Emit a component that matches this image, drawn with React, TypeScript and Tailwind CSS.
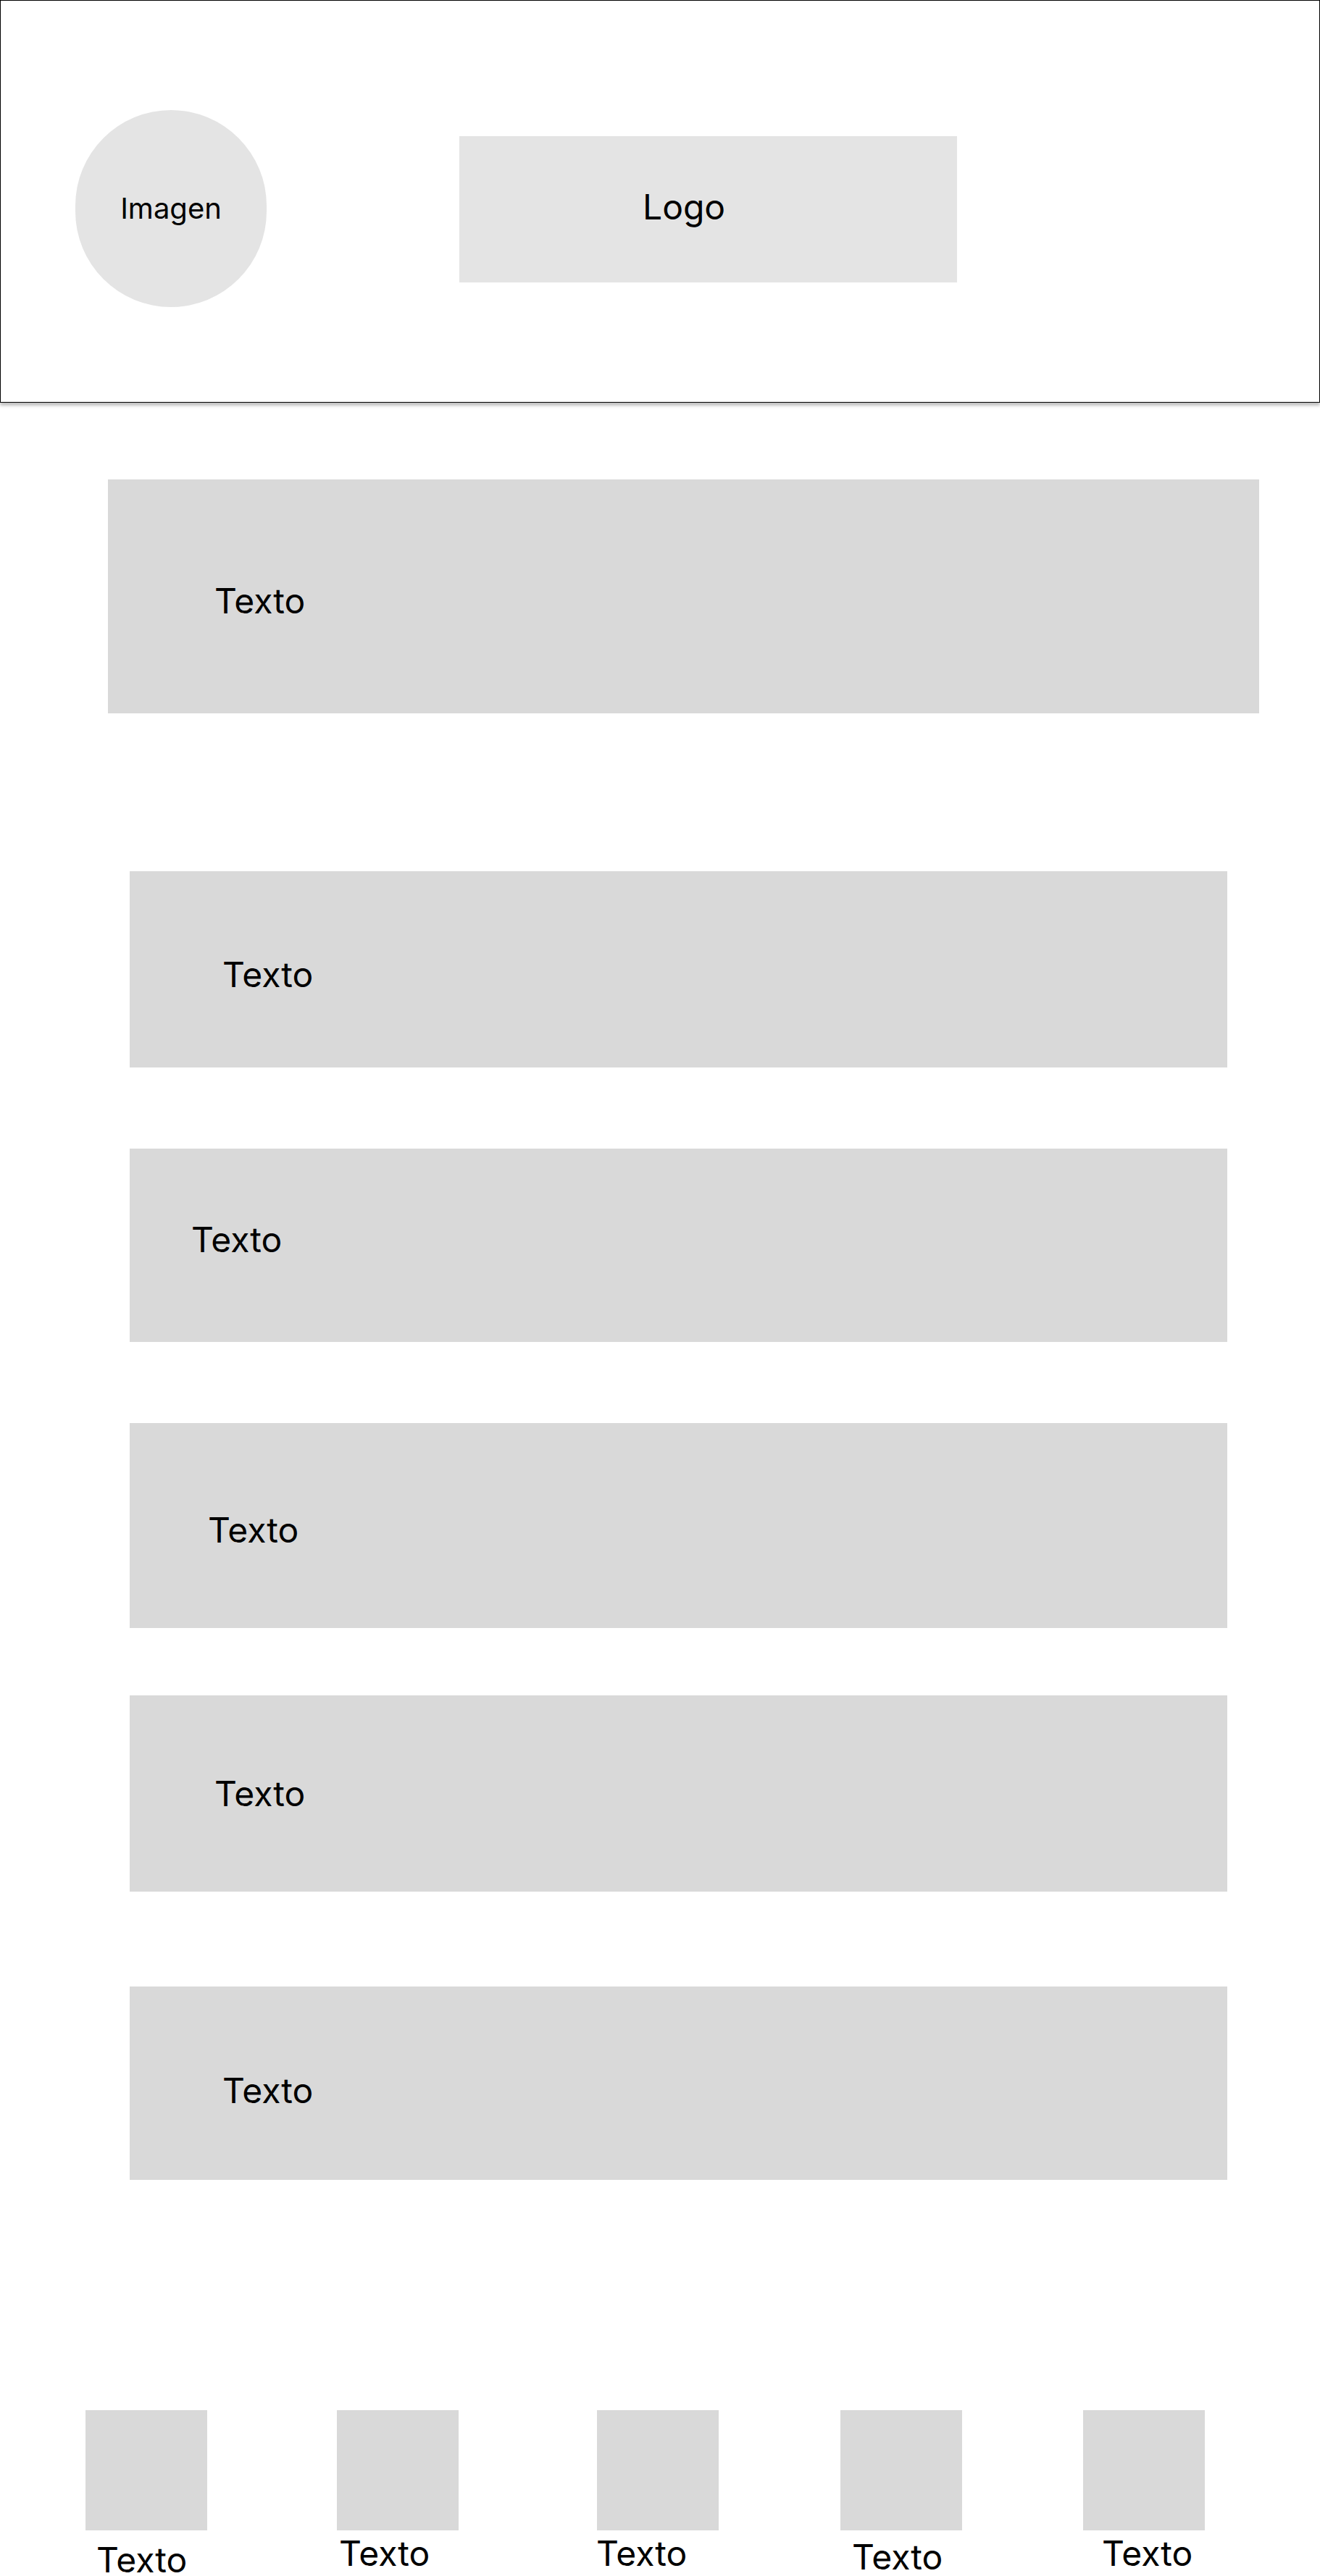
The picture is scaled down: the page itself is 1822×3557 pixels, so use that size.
import React from "react";

const rows = [
  { wrap: "mt-[106px] ml-[149px] w-[1589px] h-[323px] pl-[147px] pt-[144px]" },
  { wrap: "mt-[218px] ml-[179px] w-[1515px] h-[271px] pl-[128px] pt-[119px]" },
  { wrap: "mt-[112px] ml-[179px] w-[1515px] h-[267px] pl-[85px] pt-[102px]" },
  { wrap: "mt-[112px] ml-[179px] w-[1515px] h-[283px] pl-[108px] pt-[124px]" },
  { wrap: "mt-[93px] ml-[179px] w-[1515px] h-[271px] pl-[117px] pt-[112px]" },
  { wrap: "mt-[131px] ml-[179px] w-[1515px] h-[267px] pl-[128px] pt-[120px]" },
];

const thumbs = [
  { item: "ml-[118px]", text: "ml-[15px] mt-[17px]" },
  { item: "ml-[179px]", text: "ml-[3px] mt-[8px]" },
  { item: "ml-[191px]", text: "ml-[-1px] mt-[8px]" },
  { item: "ml-[168px]", text: "ml-[16px] mt-[13px]" },
  { item: "ml-[167px]", text: "ml-[26px] mt-[8px]" },
];

export default function App() {
  return (
    <div className="w-[1822px] h-[3557px] overflow-hidden bg-white text-black font-['Inter','Liberation_Sans',sans-serif]">
      <header className="w-[1822px] h-[556px] border border-black shadow-[0_4px_4px_rgba(0,0,0,0.25)] flex items-start bg-white">
        <div className="ml-[103px] mt-[151px] w-[264px] h-[272px] rounded-full bg-[#e4e4e4] flex items-center justify-center">
          <span className="text-[40px] leading-none">Imagen</span>
        </div>
        <div className="ml-[266px] mt-[187px] w-[687px] h-[202px] bg-[#e4e4e4] pl-[253px] pt-[74px]">
          <span className="text-[48px] leading-none">Logo</span>
        </div>
      </header>

      {rows.map((r, i) => (
        <div key={i} className={`${r.wrap} bg-[#d9d9d9]`}>
          <div className="text-[48px] leading-none">Texto</div>
        </div>
      ))}

      <div className="mt-[318px] flex items-start">
        {thumbs.map((t, i) => (
          <div key={i} className={`${t.item} flex flex-col w-[168px]`}>
            <div className="w-[168px] h-[166px] bg-[#d9d9d9]" />
            <div className={`${t.text} text-[48px] leading-none whitespace-nowrap`}>Texto</div>
          </div>
        ))}
      </div>
    </div>
  );
}
